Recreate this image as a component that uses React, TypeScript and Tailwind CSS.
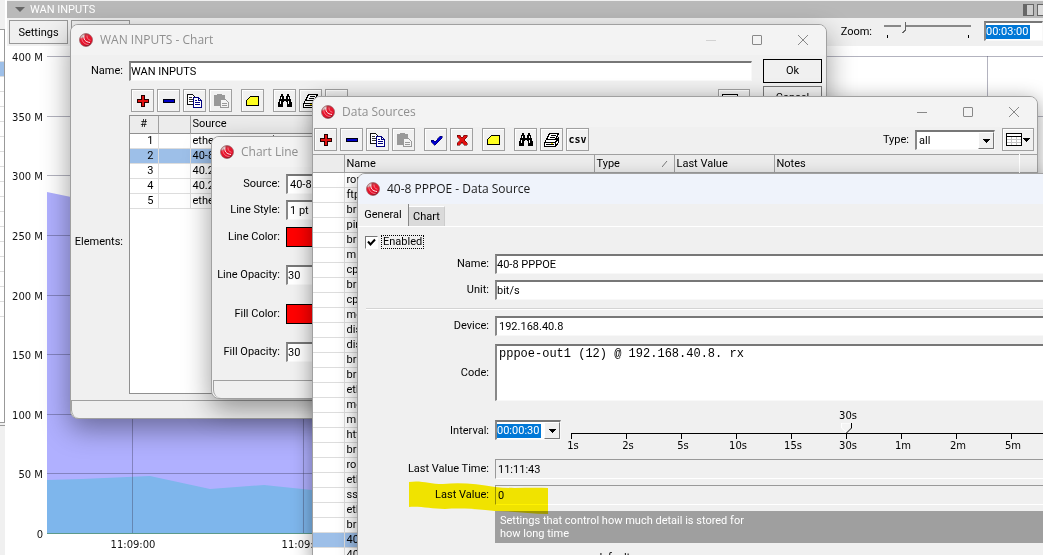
import React from 'react';

type IconName =
  | 'add'
  | 'remove'
  | 'copy'
  | 'paste'
  | 'enable'
  | 'disable'
  | 'note'
  | 'find'
  | 'print'
  | 'csv'
  | 'columns';

const inset =
  'min-w-0 border border-t-2 border-l-2 border-t-[#777] border-l-[#888] border-r-[#f8f8f8] border-b-[#f8f8f8] bg-white outline-none';

const Logo: React.FC = () => (
  <svg className="w-[14px] h-[14px] shrink-0" viewBox="0 0 14 14" aria-hidden="true">
    <defs>
      <linearGradient id="ball" x1="0.2" y1="0" x2="0.6" y2="1">
        <stop offset="0" stopColor="#a04a50" />
        <stop offset="0.4" stopColor="#e8182e" />
        <stop offset="0.8" stopColor="#e0102a" />
        <stop offset="1" stopColor="#801020" />
      </linearGradient>
    </defs>
    <circle cx="7" cy="7" r="6.5" fill="url(#ball)" stroke="#8a5055" strokeWidth="0.6" />
    <path d="M1.2 5.5A6 6 0 0 1 5.5 1L5 4z" fill="#cdbcbc" />
    <path d="M5 2.5C4.2 6 6.2 9 11 9.5" fill="none" stroke="#ffe6ea" strokeWidth="1" />
    <path d="M2.8 5c.2 4 3 6.6 6.8 6.5M8 2.5c-.2 2.4 1 4.2 3.5 4.8" fill="none" stroke="#ff9aa8" strokeWidth="0.7" />
  </svg>
);

const Icon: React.FC<{ name: IconName }> = ({ name }) => {
  if (name === 'csv') {
    return <span className="font-['DejaVu_Sans_Mono',monospace] font-bold text-[10px] leading-none">csv</span>;
  }
  if (name === 'columns') {
    return (
      <svg className="w-6 h-4" viewBox="0 0 24 16" shapeRendering="crispEdges" aria-hidden="true">
        <rect x="0.5" y="1.5" width="15" height="12" fill="#fff" stroke="#000" />
        <path d="M1 4.5h14" stroke="#000" />
        <path d="M1 7.5h14M1 10.5h14M5.5 5v8M10.5 5v8" stroke="#c4c4c4" />
        <path d="M17 6h7l-3.5 4z" fill="#000" />
      </svg>
    );
  }
  return (
    <svg className="w-4 h-4" viewBox="0 0 16 16" shapeRendering="crispEdges" aria-hidden="true">
      {name === 'add' && <path d="M6.5 2.5h3v4h4v3h-4v4h-3v-4h-4v-3h4z" fill="#e01010" stroke="#200" />}
      {name === 'remove' && <rect x="2.5" y="6.5" width="11" height="3" fill="#0000c8" stroke="#001" />}
      {name === 'copy' && (
        <>
          <path d="M.5 1.5h5l3 3v7h-8z" fill="#fff" stroke="#111" />
          <path d="M2 4.5h3M2 6.5h5M2 8.5h5" stroke="#333" />
          <path d="M6.5 4.5h5l3 3v7h-8z" fill="#fff" stroke="#000080" />
          <path d="M11.5 4.5v3h3M8 7.5h2M8 9.5h5M8 11.5h5" fill="none" stroke="#000080" />
        </>
      )}
      {name === 'paste' && (
        <>
          <path d="M1 2h3V1h5v1h3v11H1z" fill="#999" />
          <path d="M7.5 6.5h5l3 3v5h-8z" fill="#f4f4f4" stroke="#999" />
          <path d="M9 10.5h5M9 12.5h5" stroke="#999" />
        </>
      )}
      {name === 'enable' && <path d="M3 8h2l2 2 5-6h2v2l-7 7H6L3 10z" fill="#0000d0" stroke="#000040" strokeWidth="0.5" />}
      {name === 'disable' && (
        <path d="M3 3h3l2 3 2-3h3v2l-3 3 3 3v2h-3l-2-3-2 3H3v-2l3-3-3-3z" fill="#e01010" stroke="#400" strokeWidth="0.5" />
      )}
      {name === 'note' && <path d="M5.5 3.5h8v9h-12v-5z" fill="#ffff20" stroke="#000" />}
      {name === 'find' && (
        <>
          <path d="M4 1h2v2h1v3h2V3h1V1h2v2h1v3h1v3h1v5h-5V9H9V8H7v1H6v5H1V9h1V6h1V3h1z" fill="#000" />
          <path d="M4 4h1v2H4zM3 8h1v3H3zM11 4h1v2h-1zM11 8h1v3h-1z" fill="#fff" />
        </>
      )}
      {name === 'print' && (
        <>
          <path d="M5.5 1.5h9l-3 6h-9z" fill="#fff" stroke="#000" />
          <path d="M7 3.5h5M6 5.5h5" stroke="#000" />
          <path d="M2.5 7.5h10l2-2v5l-3 4h-11v-4z" fill="#fff" stroke="#000" />
          <path d="M1 10.5h10v4M11 10.5l3-3M2 12.5h8" fill="none" stroke="#000" />
          <path d="M7 11h2v1H7z" fill="#e0d000" />
        </>
      )}
    </svg>
  );
};

const ToolButton: React.FC<{ name: IconName; label: string; gap?: boolean; wide?: boolean }> = ({
  name,
  label,
  gap,
  wide,
}) => (
  <button
    type="button"
    aria-label={label}
    className={`${wide ? 'w-8' : 'w-[23px]'} ${gap ? 'ml-[9px]' : 'ml-[3px]'} h-[23px] shrink-0 flex items-center justify-center border border-[#a0a0a0] bg-[#f1f1f1] shadow-[inset_1px_1px_0_#fff]`}
  >
    <Icon name={name} />
  </button>
);

const TitleBar: React.FC<{ title: string; active?: boolean; controls?: boolean; dimMinimize?: boolean }> = ({
  title,
  active,
  controls,
  dimMinimize,
}) => (
  <header
    className={`h-[30px] shrink-0 flex items-center pl-2 pr-[18px] font-['Open_Sans',sans-serif] text-[12px] ${active ? 'bg-[#eff3fb] text-[#1a1a1a]' : 'bg-[#f3f3f3] text-[#8f8f8f]'}`}
  >
    <Logo />
    <h2 className="ml-[7px] whitespace-nowrap">{title}</h2>
    {controls && (
      <div className="ml-auto flex items-center gap-9 text-[#888]">
        <button type="button" aria-label="Minimize" className={dimMinimize ? 'opacity-30' : ''}>
          <svg className="w-[10px] h-[10px]" viewBox="0 0 10 10">
            <path d="M0 5.5h10" stroke="currentColor" />
          </svg>
        </button>
        <button type="button" aria-label="Maximize">
          <svg className="w-[10px] h-[10px]" viewBox="0 0 10 10">
            <rect x="0.5" y="0.5" width="9" height="9" rx="0.5" fill="none" stroke="currentColor" />
          </svg>
        </button>
        <button type="button" aria-label="Close">
          <svg className="w-[10px] h-[10px]" viewBox="0 0 10 10">
            <path d="M0 0l10 10M10 0L0 10" stroke="currentColor" />
          </svg>
        </button>
      </div>
    )}
  </header>
);

const ArrowDown: React.FC = () => (
  <svg className="w-[7px] h-1" viewBox="0 0 7 4" shapeRendering="crispEdges" aria-hidden="true">
    <path d="M0 0h7L3.5 4z" fill="#000" />
  </svg>
);

const arrowBox =
  'w-4 shrink-0 flex items-center justify-center bg-[#f0f0f0] border border-[#fff] border-r-[#777] border-b-[#777]';

const TICKS = [50, 100, 150, 200, 250, 300, 350, 400];
const TIMES = ['11:09:00', '11:09:30', '11:10:00', '11:10:30', '11:11:00', '11:11:30'];

const TrafficChart: React.FC = () => (
  <svg className="flex-1 w-full min-h-0 bg-white font-['DejaVu_Sans']" fontSize="10" fill="#111">
    {/* the plot starts 40px in, 50 M is a little under 60px tall */}
    <polygon points="40,146 64,151 160,170 320,200 320,487 40,487" fill="#b0b0ff" />
    <polygon
      points="40,434 75,433 143,430 203,443 257,439 305,444 320,445 320,487 40,487"
      fill="#7eb6ec"
    />
    {TICKS.map((value) => {
      const y = Math.round(487 - (value / 50) * 59.6) + 0.5;
      return (
        <g key={value}>
          <line x1="40" x2="100%" y1={y} y2={y} stroke="#404060" strokeOpacity="0.4" />
          <text x="36" y={y + 4} textAnchor="end">
            {value} M
          </text>
        </g>
      );
    })}
    <line x1="40" x2="100%" y1="487.5" y2="487.5" stroke="#5d9a8a" />
    <text x="36" y="492" textAnchor="end">
      0
    </text>
    {TIMES.map((time, i) => (
      <g key={time}>
        <line x1={125.5 + i * 171} x2={125.5 + i * 171} y1="10" y2="487" stroke="#404060" strokeOpacity="0.4" />
        <text x={126 + i * 171} y="502" textAnchor="middle">
          {time}
        </text>
      </g>
    ))}
  </svg>
);

const MainPane: React.FC = () => (
  <div className="flex h-full">
    {/* edge of the device list */}
    <aside className="w-[5px] shrink-0 flex flex-col pt-[29px] bg-[#f0f0f0]">
      <div className="h-[394px] pt-[17px] border-t border-r border-b border-[#999] bg-white">
        {Array.from({ length: 18 }, (_, i) => (
          <div key={i} className={`h-[15px] border-b border-[#ddd] ${i === 1 ? 'bg-[#9dbfe8]' : ''}`} />
        ))}
      </div>
      <div className="mt-0.5 flex-1 border-t border-[#999]" />
    </aside>
    <main className="ml-0.5 flex-1 min-w-0 flex flex-col pt-px bg-[#f0f0f0]">
      <div className="h-[17px] shrink-0 flex items-center pl-2 bg-[#b9b9b9] text-white">
        <svg className="w-[10px] h-[5px]" viewBox="0 0 10 5">
          <path d="M0 0h10L5 5z" fill="#666" />
        </svg>
        <h1 className="ml-[5px]">WAN INPUTS</h1>
        <div className="ml-auto flex gap-[3px]">
          <span className="w-[11px] h-3 border border-[#666] border-l-4 bg-[#ccc]" />
          <span className="w-[6px] h-3 border-y border-l border-[#666] bg-[#ddd]" />
        </div>
      </div>
      <div className="h-7 shrink-0 flex items-start pl-0.5 pt-0.5">
        <button type="button" className="w-[59px] h-6 pt-0.5 border border-[#999] bg-[#f0f0f0]">
          Settings
        </button>
        <button type="button" className="ml-[3px] w-[59px] h-6 pt-0.5 border border-[#999] bg-[#f0f0f0]">
          Save
        </button>
        <label htmlFor="zoom" className="ml-auto mt-[5px] mr-3">
          Zoom:
        </label>
        <div className="relative w-[88px] h-5">
          <svg className="w-full h-full" viewBox="0 0 88 20" shapeRendering="crispEdges" aria-hidden="true">
            <path d="M0 6h87" stroke="#888" strokeWidth="2" />
            <path d="M3.5 15v3M84.5 15v3" stroke="#000" />
            <path d="M17 2h4v8l-2 3-2-2z" fill="#f0f0f0" />
            <path d="M21.5 2v8l-3 3" fill="none" stroke="#666" />
          </svg>
          <input id="zoom" type="range" defaultValue="20" className="absolute inset-0 w-full opacity-0" />
        </div>
        <div className={`ml-3 w-[59px] h-5 mt-px flex items-center ${inset}`}>
          <input
            aria-label="Zoom period"
            defaultValue="00:03:00"
            className="w-[44px] h-[14px] bg-[#0078d7] text-white outline-none"
          />
        </div>
      </div>
      <TrafficChart />
    </main>
  </div>
);

const ELEMENTS = ['ether2 TERACO (MEN @ 192.168.40.1. rx', '40-8 PPPOE', '40.2 rx', '40.2 tx', 'ether1 rx'];

const ChartWindow: React.FC = () => (
  <section className="absolute left-[70px] top-6 w-[757px] rounded-lg overflow-hidden border border-[#a0a0a0] bg-[#f0f0f0] shadow-[0_10px_28px_rgba(0,0,0,0.4)]">
    <TitleBar title="WAN INPUTS - Chart" controls dimMinimize />
    <div className="flex pt-1 pr-1">
      <div className="flex-1 min-w-0 pt-0.5">
        <div className="flex items-center gap-1.5">
          <label htmlFor="chart-name" className="w-[52px] text-right">
            Name:
          </label>
          <input id="chart-name" defaultValue="WAN INPUTS" className={`flex-1 h-5 ${inset}`} />
        </div>
        <div className="mt-2 flex items-center gap-1.5">
          <span className="w-[52px] text-right">Elements:</span>
          <div className="flex-1 min-w-0">
            <div className="flex pr-0.5">
              <div className="-ml-px flex flex-1">
                <ToolButton name="add" label="Add" />
                <ToolButton name="remove" label="Remove" />
                <ToolButton name="copy" label="Copy" />
                <ToolButton name="paste" label="Paste" />
                <ToolButton name="note" label="Notes" gap />
                <ToolButton name="find" label="Find" gap />
                <ToolButton name="print" label="Print" />
                <ToolButton name="csv" label="Export" />
              </div>
              <ToolButton name="columns" label="Columns" wide />
            </div>
            <div className="mt-[3px] h-[279px] border border-[#909090] bg-white">
              <table className="w-full table-fixed border-collapse">
                <thead>
                  <tr className="h-[17px] bg-[#ececec] border-b border-[#909090]">
                    <th className="w-7 font-normal border-r border-[#a0a0a0]">#</th>
                    <th className="w-8 border-r border-[#a0a0a0]" />
                    <th className="px-0.5 font-normal text-left">Source</th>
                  </tr>
                </thead>
                <tbody>
                  {ELEMENTS.map((name, i) => (
                    <tr key={name} className={`h-[15px] border-b border-[#ddd] ${i === 1 ? 'bg-[#9dbfe8]' : ''}`}>
                      <td className="pr-1 text-right border-r border-[#ddd]">{i + 1}</td>
                      <td className="border-r border-[#ddd]" />
                      <td className="px-0.5 whitespace-nowrap">{name}</td>
                    </tr>
                  ))}
                </tbody>
              </table>
            </div>
          </div>
        </div>
      </div>
      <div className="ml-[11px] w-[59px] flex flex-col gap-[3px]">
        <button type="button" className="h-6 border border-black">
          Ok
        </button>
        <button type="button" className="h-6 border border-[#777]">
          Cancel
        </button>
      </div>
    </div>
    <div className="mt-1.5 h-[18px] rounded-b-lg border-t border-l border-[#a0a0a0]" />
  </section>
);

const ChartLineWindow: React.FC = () => (
  <section className="absolute left-[211px] top-[136px] w-[360px] rounded-lg overflow-hidden border border-[#a0a0a0] bg-[#f0f0f0] shadow-[0_10px_28px_rgba(0,0,0,0.4)]">
    <TitleBar title="Chart Line" />
    <div className="pt-[7px]">
      <div className="flex items-center gap-1.5">
        <label htmlFor="line-source" className="w-[68px] text-right">
          Source:
        </label>
        <input id="line-source" defaultValue="40-8 PPPOE" className={`w-60 h-5 px-0.5 ${inset}`} />
      </div>
      <div className="mt-1.5 flex items-center gap-1.5">
        <label htmlFor="line-style" className="w-[68px] text-right">
          Line Style:
        </label>
        <select id="line-style" className={`w-60 h-5 px-0.5 appearance-none ${inset}`}>
          <option>1 pt</option>
        </select>
      </div>
      <div className="mt-[7px] flex items-center gap-1.5">
        <span className="w-[68px] text-right">Line Color:</span>
        <button type="button" aria-label="Line color" className="w-12 h-5 border border-black bg-[#f00]" />
      </div>
      <div className="mt-[18px] flex items-center gap-1.5">
        <label htmlFor="line-opacity" className="w-[68px] text-right whitespace-nowrap">
          Line Opacity:
        </label>
        <input id="line-opacity" defaultValue="30" className={`w-12 h-5 ${inset}`} />
      </div>
      <div className="mt-[19px] flex items-center gap-1.5">
        <span className="w-[68px] text-right">Fill Color:</span>
        <button type="button" aria-label="Fill color" className="w-12 h-5 border border-black bg-[#f00]" />
      </div>
      <div className="mt-[18px] flex items-center gap-1.5">
        <label htmlFor="fill-opacity" className="w-[68px] text-right whitespace-nowrap">
          Fill Opacity:
        </label>
        <input id="fill-opacity" defaultValue="30" className={`w-12 h-5 ${inset}`} />
      </div>
    </div>
    <div className="mt-[18px] ml-px h-[18px] rounded-b-lg border-t border-l border-[#a0a0a0]" />
  </section>
);

const SOURCES = [
  'router', 'ftp @', 'bridge', 'ping @', 'bridge', 'mikrotik', 'cpu @', 'bridge', 'cpu @', 'memory',
  'disk @', 'disk @', 'bridge', 'bridge', 'ether1', 'memory', 'mikrotik', 'http @', 'bridge', 'router',
  'ether2', 'ssh @', 'ether3', 'bridge', '40-8 PPPOE', '40-8 PPPOE',
];

const DataSourcesWindow: React.FC = () => (
  <section className="absolute left-[312px] top-24 -bottom-2 w-[726px] flex flex-col rounded-t-lg overflow-hidden border border-[#a0a0a0] bg-[#f0f0f0] shadow-[0_4px_20px_rgba(0,0,0,0.4)]">
    <TitleBar title="Data Sources" controls />
    <div className="pt-px pr-[3px] -ml-0.5 flex">
      <ToolButton name="add" label="Add source" />
      <ToolButton name="remove" label="Remove source" />
      <ToolButton name="copy" label="Copy source" />
      <ToolButton name="paste" label="Paste source" />
      <ToolButton name="enable" label="Enable" gap />
      <ToolButton name="disable" label="Disable" />
      <ToolButton name="note" label="Source notes" gap />
      <ToolButton name="find" label="Find source" gap />
      <ToolButton name="print" label="Print sources" />
      <ToolButton name="csv" label="Export CSV" />
      <label htmlFor="type" className="ml-auto mr-1.5 self-center">
        Type:
      </label>
      <div className={`w-20 h-5 mt-0.5 mr-1 flex ${inset}`}>
        <select id="type" className="flex-1 min-w-0 px-0.5 appearance-none outline-none">
          <option>all</option>
        </select>
        <span className={arrowBox}>
          <ArrowDown />
        </span>
      </div>
      <ToolButton name="columns" label="Source columns" wide />
    </div>
    <div className="mt-[3px] flex-1 min-h-0 bg-white">
      <table className="w-full table-fixed border-collapse">
        <thead>
          <tr className="h-[18px] bg-[#ececec] border-y border-[#a0a0a0] text-left">
            <th className="w-[31px] border-r border-[#a0a0a0]" />
            <th className="w-[250px] px-0.5 font-normal border-r border-[#a0a0a0]">Name</th>
            <th className="w-20 px-0.5 font-normal border-r border-[#a0a0a0]">
              <span className="flex items-center">
                Type
                <svg className="ml-auto mr-1 w-[6px] h-[6px]" viewBox="0 0 6 6">
                  <path d="M0 6L5 0" stroke="#777" />
                </svg>
              </span>
            </th>
            <th className="w-[100px] px-0.5 font-normal border-r border-[#a0a0a0]">Last Value</th>
            <th className="w-[245px] px-0.5 font-normal border-r border-[#fff]">Notes</th>
            <th />
          </tr>
        </thead>
        <tbody>
          {SOURCES.map((name, i) => (
            <tr key={i} className={`h-[15px] border-b border-[#ddd] ${i === 24 ? 'bg-[#9dbfe8]' : ''}`}>
              <td className="border-r border-[#ddd]" />
              <td className="px-0.5 whitespace-nowrap">{name}</td>
              <td />
              <td />
              <td />
              <td />
            </tr>
          ))}
        </tbody>
      </table>
    </div>
  </section>
);

const INTERVALS = ['1s', '2s', '5s', '10s', '15s', '30s', '1m', '2m', '5m'];

const formLabel = 'w-[131px] shrink-0 text-right';
const readOnly =
  'flex-1 min-w-0 h-5 px-0.5 border border-t-[#999] border-l-[#999] border-r-white border-b-white bg-transparent outline-none';

const DataSourceWindow: React.FC = () => (
  <section className="absolute left-[357px] top-[173px] -right-4 -bottom-2 flex flex-col rounded-tl-lg overflow-hidden border border-[#a0a0a0] bg-[#f0f0f0] shadow-[0_8px_20px_rgba(0,0,0,0.4)]">
    <TitleBar title="40-8 PPPOE - Data Source" active />
    <nav className="h-[23px] shrink-0 flex items-end border-b border-white">
      <button type="button" className="w-[51px] h-[22px] border-r border-[#888]">
        General
      </button>
      <button type="button" className="w-9 h-5 border-t border-r border-[#fff] border-r-[#ccc] bg-[#dadada]">
        Chart
      </button>
    </nav>
    <div className="mt-2 ml-[7px] flex items-center gap-[5px]">
      <input
        id="enabled"
        type="checkbox"
        defaultChecked
        className="peer appearance-none w-[13px] h-[13px] border border-[#777] border-r-white border-b-white bg-white"
      />
      <svg className="-ml-4 w-[9px] h-[9px] pointer-events-none invisible peer-checked:visible" viewBox="0 0 9 9" aria-hidden="true">
        <path d="M1 3.5l2.5 3L8 1.5" fill="none" stroke="#000" strokeWidth="2" />
      </svg>
      <label htmlFor="enabled" className="h-[14px] px-px leading-[12px] border border-dotted border-black">
        Enabled
      </label>
    </div>
    <div className="mt-[5px] flex items-center gap-1.5">
      <label htmlFor="name" className={formLabel}>
        Name:
      </label>
      <input id="name" defaultValue="40-8 PPPOE" className={`flex-1 h-5 ${inset}`} />
    </div>
    <div className="mt-1.5 flex items-center gap-1.5">
      <label htmlFor="unit" className={formLabel}>
        Unit:
      </label>
      <input id="unit" defaultValue="bit/s" className={`flex-1 h-5 ${inset}`} />
    </div>
    <hr className="mt-2 ml-2 border-[#d4d4d4] shadow-[0_1px_0_#fff]" />
    <div className="mt-[7px] flex items-center gap-1.5">
      <label htmlFor="device" className={formLabel}>
        Device:
      </label>
      <input id="device" defaultValue="192.168.40.8" className={`flex-1 h-5 px-0.5 ${inset}`} />
    </div>
    <div className="mt-2 flex items-center gap-1.5">
      <label htmlFor="code" className={formLabel}>
        Code:
      </label>
      <textarea
        id="code"
        defaultValue="pppoe-out1 (12) @ 192.168.40.8. rx"
        className={`flex-1 h-[57px] px-0.5 pt-0.5 resize-none font-['Liberation_Mono',monospace] text-[12px] leading-[13px] ${inset}`}
      />
    </div>
    <div className="flex items-start gap-1.5">
      <label htmlFor="interval" className={`mt-[23px] ${formLabel}`}>
        Interval:
      </label>
      <div className={`mt-[19px] w-[66px] h-5 flex items-center shrink-0 ${inset}`}>
        <input id="interval" defaultValue="00:00:30" className="w-[44px] h-[14px] bg-[#0078d7] text-white outline-none" />
        <button type="button" aria-label="Choose interval" className={`ml-auto h-full ${arrowBox}`}>
          <ArrowDown />
        </button>
      </div>
      <div className="relative ml-1 mt-2 flex-1 min-w-0 font-['DejaVu_Sans'] text-[10px] leading-[14px]">
        <ul className="flex">
          {INTERVALS.map((step) => (
            <li key={step} className="w-[55px] shrink-0 last:flex-1">
              <div className="w-5 h-6 -ml-2">
                {step === '30s' && (
                  <>
                    <span className="block text-center leading-[14px]">{step}</span>
                    <svg className="ml-0.5 w-3 h-[10px]" viewBox="0 0 12 10" aria-hidden="true">
                      <path d="M6.5 9.5L1.5 5V0h10" fill="#f4f4f4" stroke="#fff" />
                      <path d="M11.5 0v5l-5 5" fill="none" stroke="#000" />
                    </svg>
                  </>
                )}
              </div>
              <div className="border-t border-black">
                <div className="w-px h-[5px] bg-black" />
              </div>
              <span className="block w-5 -ml-2 text-center">{step}</span>
            </li>
          ))}
        </ul>
        <input
          type="range"
          aria-label="Interval slider"
          min="0"
          max="8"
          defaultValue="5"
          className="absolute inset-x-0 top-3 opacity-0"
        />
      </div>
    </div>
    <div className="mt-1.5 flex items-center gap-1.5">
      <label htmlFor="last-time" className={formLabel}>
        Last Value Time:
      </label>
      <input id="last-time" readOnly value="11:11:43" className={readOnly} />
    </div>
    <div className="relative mt-1.5 flex items-center gap-1.5">
      {/* marker stroke over the latest value */}
      <svg className="absolute left-[51px] -top-1 w-[140px] h-[34px] mix-blend-multiply pointer-events-none" viewBox="0 0 140 34" aria-hidden="true">
        <path d="M0 1c12-2 20 2 34 2 18-2 34 0 52 3 18 2 34 0 53 1v26c-18 0-34-3-53-3-18-2-34-3-50-2-14 0-24-3-36-2z" fill="#fff200" />
      </svg>
      <label htmlFor="last-value" className={formLabel}>
        Last Value:
      </label>
      <input id="last-value" readOnly value="0" className={readOnly} />
    </div>
    <p className="mt-1.5 ml-[137px] h-8 shrink-0 px-[5px] pt-[3px] bg-[#9f9f9f] text-white leading-[13px]">
      Settings that control how much detail is stored for
      <br />
      how long time
    </p>
    <span className="mt-2 ml-[238px]">default:</span>
  </section>
);

const App: React.FC = () => {
  return (
    <div className="relative h-screen overflow-hidden font-['Roboto','Liberation_Sans',sans-serif] text-[11px] leading-[14px] text-black">
      <MainPane />
      <ChartWindow />
      <ChartLineWindow />
      <DataSourcesWindow />
      <DataSourceWindow />
    </div>
  );
};

export default App;
